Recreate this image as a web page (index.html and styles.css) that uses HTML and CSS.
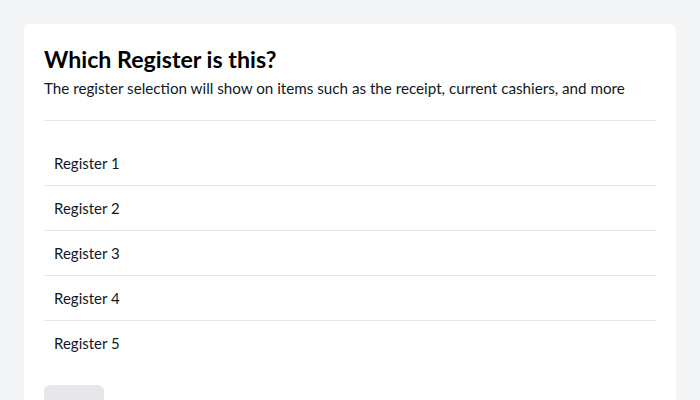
FILE: index.html
```html
<!DOCTYPE html>
<html lang="en">
<head>
<meta charset="utf-8">
<title>Which Register is this?</title>
<link rel="stylesheet" href="styles.css">
</head>
<body>
<main class="page">
  <section class="card">
    <header class="card-header">
      <h1 class="title">Which Register is this?</h1>
      <p class="subtitle">The register selection will show on items such as the receipt, current cashiers, and more</p>
    </header>
    <ul class="register-list">
      <li class="register-item">Register 1</li>
      <li class="register-item">Register 2</li>
      <li class="register-item">Register 3</li>
      <li class="register-item">Register 4</li>
      <li class="register-item">Register 5</li>
    </ul>
    <div class="actions">
      <button class="btn" type="button"></button>
    </div>
  </section>
</main>
</body>
</html>
```

FILE: styles.css
```css
html, body {
  margin: 0;
  padding: 0;
  background: #f3f4f6;
  font-family: "Lato", "Noto Sans", sans-serif;
  color: #111827;
}

.page {
  padding: 24px;
}

.card {
  background: #ffffff;
  border-radius: 6px;
  padding: 20px 20px 24px;
}

.card-header {
  padding-bottom: 20px;
  border-bottom: 1px solid #e5e7eb;
}

.title {
  margin: 0;
  font-size: 23.2px;
  line-height: 30px;
  font-weight: 700;
  color: #000;
}

.subtitle {
  margin: 2px 0 0;
  font-size: 15.2px;
  line-height: 24px;
  color: #111827;
}

.register-list {
  list-style: none;
  margin: 20px 0 0;
  padding: 0;
}

.register-item {
  padding: 10px;
  font-size: 15px;
  line-height: 24px;
  border-bottom: 1px solid #e5e7eb;
}

.register-item:last-child {
  border-bottom: none;
}

.actions {
  margin-top: 20px;
}

.btn {
  width: 60px;
  height: 36px;
  border: none;
  border-radius: 6px;
  background: #e5e7eb;
}
```
